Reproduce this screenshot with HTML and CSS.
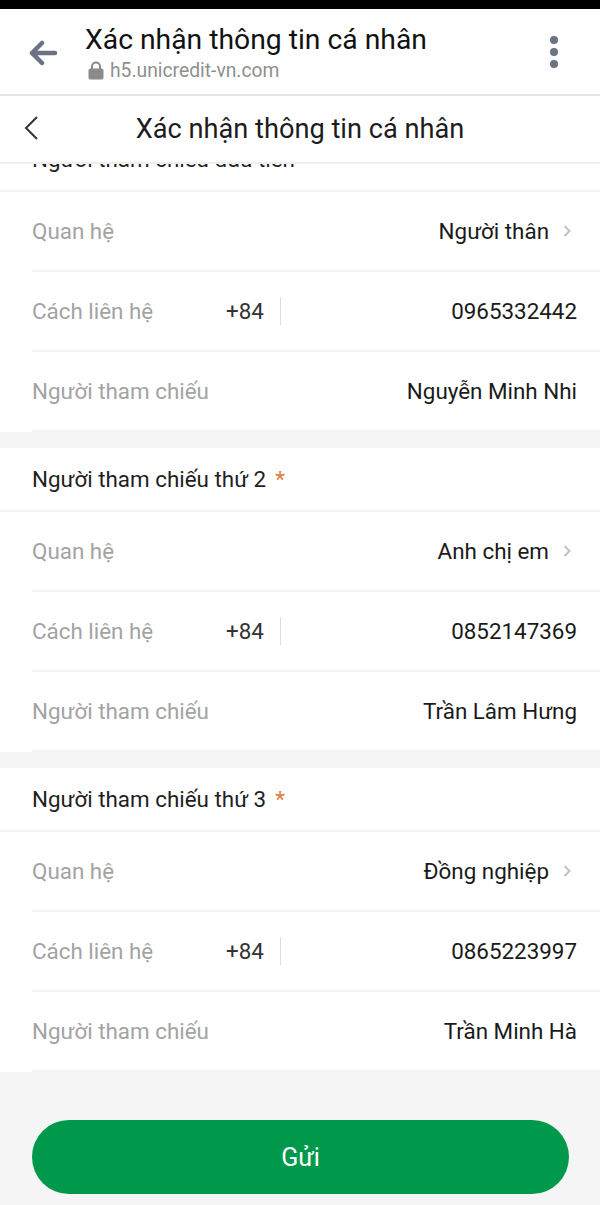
FILE: index.html
```html
<!DOCTYPE html>
<html lang="vi">
<head>
    <meta charset="UTF-8">
    <meta name="viewport" content="width=device-width, initial-scale=1.0">
    <title>Xác nhận thông tin cá nhân</title>
    <link rel="stylesheet" href="styles.css">
</head>
<body>
    <div class="status-strip"></div>

    <header class="browser-bar">
        <svg class="browser-back" width="30" height="26" viewBox="0 0 30 26">
            <path d="M27 13H4M14 3L4 13l10 10" fill="none" stroke="#6b7285" stroke-width="4.5" stroke-linecap="round" stroke-linejoin="round"/>
        </svg>
        <div class="browser-info">
            <div class="browser-title">Xác nhận thông tin cá nhân</div>
            <div class="browser-url">
                <svg width="16" height="19" viewBox="0 0 16 19">
                    <path d="M4 8V5.5a4 4 0 0 1 8 0V8" fill="none" stroke="#8a8a8a" stroke-width="2"/>
                    <rect x="0.5" y="7.5" width="15" height="11" rx="2" fill="#8a8a8a"/>
                </svg>
                <span>h5.unicredit-vn.com</span>
            </div>
        </div>
        <div class="browser-menu"><i></i><i></i><i></i></div>
    </header>

    <nav class="app-nav">
        <svg class="nav-back" width="16" height="26" viewBox="0 0 16 26">
            <path d="M14 2L3 13l11 11" fill="none" stroke="#333" stroke-width="2"/>
        </svg>
        <h1>Xác nhận thông tin cá nhân</h1>
    </nav>

    <main class="content">
        <section class="group">
            <div class="group-head">Người tham chiếu đầu tiên</div>
            <div class="row">
                <span class="label">Quan hệ</span>
                <span class="value">Người thân</span>
                <svg class="chevron" width="8" height="14" viewBox="0 0 8 14"><path d="M1.5 2l5 5-5 5" fill="none" stroke="#c2c2c2" stroke-width="2"/></svg>
            </div>
            <div class="row">
                <span class="label label-phone">Cách liên hệ</span>
                <span class="prefix">+84</span>
                <span class="value">0965332442</span>
            </div>
            <div class="row">
                <span class="label">Người tham chiếu</span>
                <span class="value">Nguyễn Minh Nhi</span>
            </div>
        </section>

        <section class="group">
            <div class="group-head">Người tham chiếu thứ 2 <em>*</em></div>
            <div class="row">
                <span class="label">Quan hệ</span>
                <span class="value">Anh chị em</span>
                <svg class="chevron" width="8" height="14" viewBox="0 0 8 14"><path d="M1.5 2l5 5-5 5" fill="none" stroke="#c2c2c2" stroke-width="2"/></svg>
            </div>
            <div class="row">
                <span class="label label-phone">Cách liên hệ</span>
                <span class="prefix">+84</span>
                <span class="value">0852147369</span>
            </div>
            <div class="row">
                <span class="label">Người tham chiếu</span>
                <span class="value">Trần Lâm Hưng</span>
            </div>
        </section>

        <section class="group">
            <div class="group-head">Người tham chiếu thứ 3 <em>*</em></div>
            <div class="row">
                <span class="label">Quan hệ</span>
                <span class="value">Đồng nghiệp</span>
                <svg class="chevron" width="8" height="14" viewBox="0 0 8 14"><path d="M1.5 2l5 5-5 5" fill="none" stroke="#c2c2c2" stroke-width="2"/></svg>
            </div>
            <div class="row">
                <span class="label label-phone">Cách liên hệ</span>
                <span class="prefix">+84</span>
                <span class="value">0865223997</span>
            </div>
            <div class="row">
                <span class="label">Người tham chiếu</span>
                <span class="value">Trần Minh Hà</span>
            </div>
        </section>

        <div class="actions">
            <button class="submit">Gửi</button>
        </div>
    </main>
</body>
</html>
```

FILE: styles.css
```css
* {
    margin: 0;
    padding: 0;
    box-sizing: border-box;
    font-family: Roboto, sans-serif;
}

html, body {
    height: 1205px;
    overflow: hidden;
}

body {
    background: #f5f5f5;
}

.status-strip {
    height: 9px;
    background: #000;
}

.browser-bar {
    height: 87px;
    background: #fff;
    border-bottom: 2px solid #e6e6e6;
    display: flex;
    align-items: center;
    padding-left: 28px;
}

.browser-back {
    flex: none;
    margin-top: 2px;
}

.browser-info {
    margin-left: 27px;
    flex: 1;
    padding-top: 2px;
}

.browser-title {
    font-size: 28.3px;
    line-height: 34px;
    color: #111;
}

.browser-url {
    display: flex;
    align-items: center;
    gap: 6px;
    margin-top: 2px;
    margin-left: 3px;
    font-size: 19.3px;
    line-height: 24px;
    color: #8f8f8f;
}

.browser-menu {
    flex: none;
    width: 8px;
    margin-right: 42px;
    display: flex;
    flex-direction: column;
    gap: 4px;
}

.browser-menu i {
    width: 8px;
    height: 8px;
    border-radius: 50%;
    background: #6b7285;
}

.app-nav {
    position: relative;
    z-index: 1;
    height: 68px;
    background: #fff;
    border-bottom: 2px solid #eee;
    display: flex;
    align-items: center;
    justify-content: center;
}

.nav-back {
    position: absolute;
    left: 23px;
    top: 19px;
}

.app-nav h1 {
    font-size: 27.2px;
    font-weight: 400;
    color: #1c1c1c;
}

.content {
    margin-top: -36px;
}

.group {
    background: #fff;
    margin-bottom: 16px;
}

.group-head {
    height: 64px;
    padding-left: 32px;
    display: flex;
    align-items: center;
    gap: 9px;
    font-size: 22.4px;
    color: #1f1f1f;
    border-bottom: 2px solid #f3f3f3;
}

.group-head em {
    font-style: normal;
    color: #e0793f;
}

.row {
    height: 80px;
    margin-left: 32px;
    padding-right: 23px;
    display: flex;
    align-items: center;
    font-size: 22.4px;
    border-bottom: 2px solid #f3f3f3;
}

.label {
    color: #a3a3a3;
}

.label-phone {
    width: 194px;
}

.prefix {
    width: 55px;
    height: 28px;
    line-height: 28px;
    color: #333;
    border-right: 1px solid #ddd;
}

.value {
    margin-left: auto;
    color: #1a1a1a;
}

.chevron {
    margin-left: 14px;
    margin-right: 6px;
}

.actions {
    padding: 32px 31px 0 32px;
}

.submit {
    width: 100%;
    height: 74px;
    border: 0;
    border-radius: 37px;
    background: #00994c;
    color: #fff;
    font-size: 25px;
}
```
